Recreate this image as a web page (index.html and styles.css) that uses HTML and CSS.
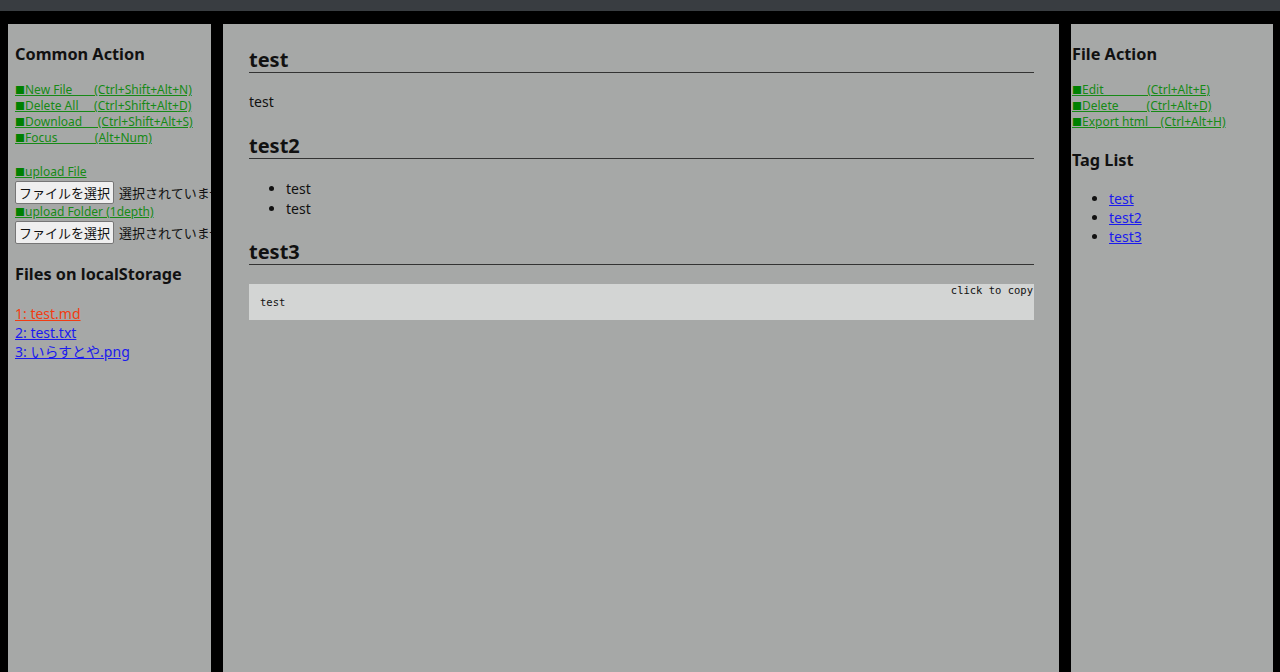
FILE: index.html
```html
<!DOCTYPE html>
<html lang="ja">
<head>
    <meta charset="UTF-8">
    <meta name="viewport" content="width=device-width, initial-scale=1.0">
    <title>memo</title>
    <link rel="stylesheet" href="styles.css">
</head>
<body>
    <div class="topbar"></div>
    <div class="layout">
        <!-- 左メニュー -->
        <div class="side left">
            <h3>Common Action</h3>
            <div class="actions">
                <a href="#" class="action"><span class="sq">■</span>New File       (Ctrl+Shift+Alt+N)</a>
                <a href="#" class="action"><span class="sq">■</span>Delete All     (Ctrl+Shift+Alt+D)</a>
                <a href="#" class="action"><span class="sq">■</span>Download     (Ctrl+Shift+Alt+S)</a>
                <a href="#" class="action"><span class="sq">■</span>Focus            (Alt+Num)</a>
            </div>
            <div class="uploads">
                <a href="#" class="action"><span class="sq">■</span>upload File</a>
                <div class="file-input"><button class="file-btn">ファイルを選択</button><span class="file-none">選択されていません</span></div>
                <a href="#" class="action"><span class="sq">■</span>upload Folder (1depth)</a>
                <div class="file-input"><button class="file-btn">ファイルを選択</button><span class="file-none">選択されていません</span></div>
            </div>
            <h3>Files on localStorage</h3>
            <div class="files">
                <a href="#" class="file current">1: test.md</a>
                <a href="#" class="file">2: test.txt</a>
                <a href="#" class="file">3: いらすとや.png</a>
            </div>
        </div>

        <!-- 本文 -->
        <div class="main">
            <h2>test</h2>
            <p>test</p>
            <h2>test2</h2>
            <ul>
                <li>test</li>
                <li>test</li>
            </ul>
            <h2>test3</h2>
            <div class="code">
                <span class="copy">click to copy</span>
                <pre>test</pre>
            </div>
        </div>

        <!-- 右メニュー -->
        <div class="side right">
            <h3>File Action</h3>
            <div class="actions">
                <a href="#" class="action"><span class="sq">■</span>Edit              (Ctrl+Alt+E)</a>
                <a href="#" class="action"><span class="sq">■</span>Delete         (Ctrl+Alt+D)</a>
                <a href="#" class="action"><span class="sq">■</span>Export html    (Ctrl+Alt+H)</a>
            </div>
            <h3>Tag List</h3>
            <ul class="tags">
                <li><a href="#">test</a></li>
                <li><a href="#">test2</a></li>
                <li><a href="#">test3</a></li>
            </ul>
        </div>
    </div>
</body>
</html>
```

FILE: styles.css
```css
/* 全体 */
body {
    font-family: "Noto Sans", "Noto Sans CJK JP", sans-serif;
    background-color: #000;
    color: #111;
    margin: 0;
    padding: 0;
}

.topbar {
    height: 11px;
    background-color: #393d41;
}

.layout {
    display: flex;
    gap: 12px;
    padding: 13px 7px 0 8px;
    height: 648px;
}

/* サイドメニュー */
.side {
    background-color: #a6a8a7;
    overflow: hidden;
    white-space: nowrap;
}

.left {
    width: 196px;
    padding-left: 7px;
}

.right {
    width: 201px;
    padding-left: 1px;
}

.side h3 {
    font-size: 16.3px;
    line-height: 24px;
    margin: 18px 0 16px;
}

.actions,
.uploads {
    display: flex;
    flex-direction: column;
    align-items: flex-start;
}

.uploads {
    margin-top: 18px;
}

.action {
    font-size: 12px;
    line-height: 16px;
    color: #168a16;
    white-space: pre;
}

.sq {
    font-size: 10px;
    color: #008000;
}

.file-input {
    display: flex;
    align-items: center;
    height: 24px;
    font-size: 13px;
}

.file-btn {
    font-family: inherit;
    font-size: 13px;
    height: 23px;
    padding: 0 3px;
    margin-right: 5px;
    background-color: #efefef;
    border: 1px solid #767676;
    border-radius: 2px;
    color: #111;
}

.files {
    display: flex;
    flex-direction: column;
    align-items: flex-start;
    margin-top: 18px;
}

.file {
    font-size: 14px;
    line-height: 19px;
    color: #1a1aee;
}

.file.current {
    color: #f23c12;
}

.tags {
    margin: 17px 0 0;
    padding-left: 37px;
    font-size: 14px;
    line-height: 19px;
}

.tags a {
    color: #1a1aee;
}

/* 本文 */
.main {
    flex: 1;
    background-color: #a6a8a7;
    padding: 3px 25px 0 26px;
    font-size: 14px;
}

.main h2 {
    font-size: 20px;
    line-height: 25px;
    margin: 20px 0 19px;
    border-bottom: 1px solid #333;
}

.main p {
    line-height: 20px;
    margin: 0;
    padding-bottom: 1px;
}

.main ul {
    margin: 20px 0 0;
    padding-left: 37px;
    line-height: 20px;
}

.code {
    position: relative;
    background-color: #d3d5d4;
    height: 36px;
}

.code pre {
    font-family: "DejaVu Sans Mono", monospace;
    font-size: 10.5px;
    line-height: 16px;
    margin: 0;
    padding: 10px 11px;
}

.copy {
    position: absolute;
    top: 0;
    right: 1px;
    font-family: "DejaVu Sans Mono", monospace;
    font-size: 10.5px;
    line-height: 12px;
    cursor: pointer;
}
```
